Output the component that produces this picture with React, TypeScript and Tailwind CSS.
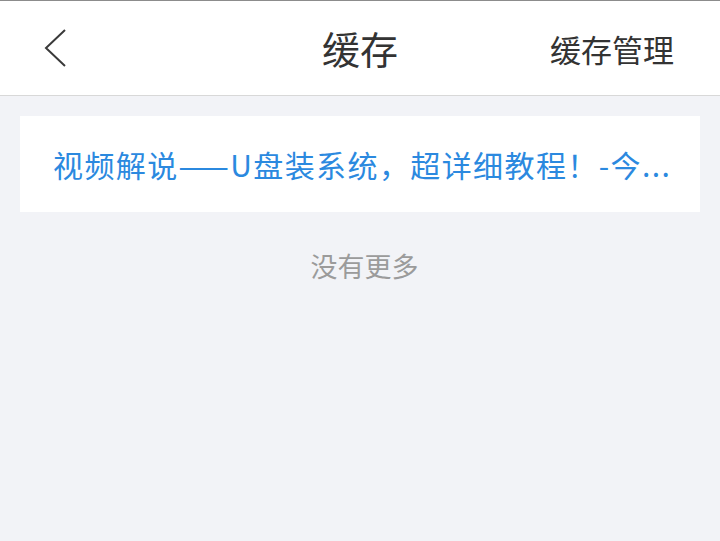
import React from "react";

export default function App() {
  return (
    <div
      className="w-[720px] h-[541px] bg-[#f2f3f7] border-t border-[#8c8c8c] overflow-hidden"
      style={{ fontFamily: '"Noto Sans CJK SC", "Noto Sans", sans-serif' }}
    >
      <header className="h-[95px] bg-white border-b border-[#d8d8d8] grid grid-cols-[1fr_auto_1fr] items-center">
        <div className="pl-[43px] flex items-center">
          <svg width="24" height="40" viewBox="0 0 24 40" fill="none">
            <path d="M22 2 L3 20 L22 38" stroke="#3a3a3a" strokeWidth="2" strokeLinejoin="miter" />
          </svg>
        </div>
        <h1 className="text-[38px] leading-none text-[#333333] font-normal">缓存</h1>
        <div className="flex justify-end pr-[46px]">
          <span className="text-[31px] leading-none text-[#333333]">缓存管理</span>
        </div>
      </header>
      <main className="px-[20px] pt-[20px]">
        <div className="h-[96px] bg-white flex items-center pl-[33px]">
          <p className="text-[30px] leading-none tracking-[1.4px] text-[#2b89df] whitespace-nowrap">
            视频解说——U盘装系统，超详细教程！-今...
          </p>
        </div>
        <p className="mt-[34px] pl-[9px] text-center text-[27px] leading-[40px] text-[#9b9b9b]">没有更多</p>
      </main>
    </div>
  );
}
